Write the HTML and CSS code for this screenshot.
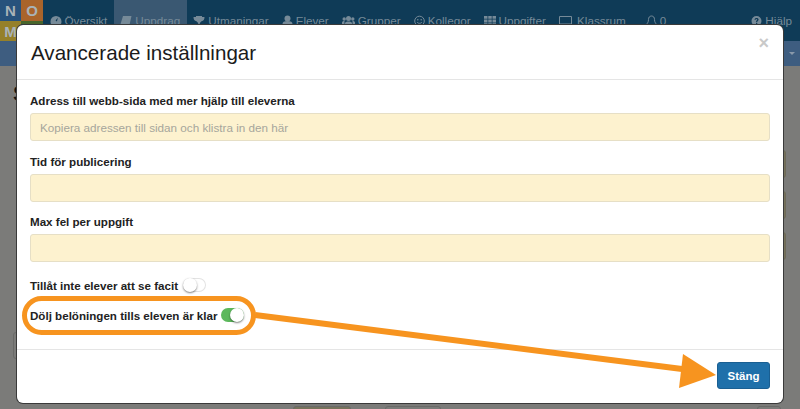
FILE: index.html
```html
<!DOCTYPE html>
<html lang="sv">
<head>
<meta charset="utf-8">
<title>Avancerade inställningar</title>
<link rel="stylesheet" href="styles.css">
</head>
<body>
<div class="page">
  <header class="navbar">
    <div class="logo">
      <span class="tile tile-n">N</span>
      <span class="tile tile-o">O</span>
      <span class="tile tile-m">M</span>
      <span class="tile-g"></span>
    </div>
    <nav class="nav">
      <a class="nav-item"><svg class="ico" width="12" height="11" viewBox="0 0 13 12"><path d="M6.500 1A6 6 0 0 0 .5 7c0 1.700.6 3.200 1.600 4h8.800c1-.8 1.600-2.300 1.600-4a6 6 0 0 0-6-6zM6 6l2.500-3L7.500 7z" fill="currentColor" fill-rule="evenodd"/></svg>Översikt</a>
      <a class="nav-item is-active"><svg class="ico" width="12" height="12" viewBox="0 0 12 12"><path d="M3 1h8.500L9.500 10H1.500C.5 10 .5 8.500 1 7.500z" fill="currentColor"/></svg>Uppdrag</a>
      <a class="nav-item"><svg class="ico" width="12" height="12" viewBox="0 0 12 12"><path d="M3 1h6v1h2.500c0 2.500-1 4-3 4.300C8 7.200 7 7.600 6.800 8v1.500H8.500V11h-5V9.500h1.700V8C5 7.600 4 7.200 3.500 6.300 1.500 6 .5 4.500.5 2H3z" fill="currentColor"/></svg>Utmaningar</a>
      <a class="nav-item"><svg class="ico" width="11" height="12" viewBox="0 0 11 12"><circle cx="5.500" cy="3.500" r="3" fill="currentColor"/><path d="M.5 11.500V9c0-1.800 1.500-3 5-3s5 1.200 5 3v2.500z" fill="currentColor"/></svg>Elever</a>
      <a class="nav-item"><svg class="ico" width="13" height="12" viewBox="0 0 13 12"><circle cx="6.500" cy="3.500" r="2.500" fill="currentColor"/><circle cx="2.200" cy="4" r="1.700" fill="currentColor"/><circle cx="10.800" cy="4" r="1.700" fill="currentColor"/><path d="M3 11V8.500C3 7 4.500 6.500 6.500 6.500S10 7 10 8.500V11zM0 9V7.500C0 6.500 1 6 2.500 6v3zM13 9V7.500C13 6.500 12 6 10.500 6v3z" fill="currentColor"/></svg>Grupper</a>
      <a class="nav-item"><svg class="ico" width="11" height="12" viewBox="0 0 11 12"><circle cx="5.500" cy="6" r="4.800" fill="none" stroke="currentColor"/><circle cx="3.800" cy="4.800" r=".8" fill="currentColor"/><circle cx="7.200" cy="4.800" r=".8" fill="currentColor"/><path d="M3.200 7.300c1 1.400 3.600 1.400 4.600 0" fill="none" stroke="currentColor"/></svg>Kollegor</a>
      <a class="nav-item"><svg class="ico" width="12" height="12" viewBox="0 0 12 12"><path d="M0 1h3.500v2.800H0zM4.250 1h3.500v2.800h-3.500zM8.500 1H12v2.800H8.500zM0 4.600h3.500v2.800H0zM4.250 4.600h3.500v2.800h-3.500zM8.500 4.600H12v2.800H8.500zM0 8.200h3.500V11H0zM4.250 8.200h3.500V11h-3.500zM8.500 8.200H12V11H8.500z" fill="currentColor"/></svg>Uppgifter</a>
      <a class="nav-item"><svg class="ico ico-wide" width="13" height="12" viewBox="0 0 13 12"><path d="M.5 1.500h12v7.500H.5zM4 11.300h5M6.500 9v2" fill="none" stroke="currentColor"/></svg>Klassrum</a>
      <a class="nav-item nav-bell"><svg class="ico" width="11" height="12" viewBox="0 0 11 12"><path d="M5.500 1C3.500 1 2.500 2.500 2.500 4.500c0 3-1.500 4-2 5h10c-.5-1-2-2-2-5C8.500 2.500 7.500 1 5.500 1zM4.300 10.500c.3 1 2.100 1 2.400 0" fill="none" stroke="currentColor"/></svg>0</a>
      <a class="nav-item nav-help"><svg class="ico" width="11" height="12" viewBox="0 0 11 12"><path d="M5.500 1a5 5 0 1 0 0 10 5 5 0 0 0 0-10zM5 8h1.300v1.300H5zM3.500 4.700C3.600 3.500 4.400 2.900 5.600 2.900c1.200 0 2 .7 2 1.700 0 1.500-1.500 1.300-1.400 2.700H5c-.1-1.800 1.200-1.800 1.200-2.700 0-.4-.3-.6-.7-.6-.5 0-.7.3-.8.7z" fill="currentColor" fill-rule="evenodd"/></svg>Hjälp</a>
    </nav>
  </header>
  <div class="subbar"><span class="caret"></span></div>
  <main class="behind">
    <div class="behind-left">
      <h1 class="behind-title">S</h1>
      <div class="stub-left"></div>
    </div>
    <div class="behind-right">
      <div class="stub-right"></div>
      <div class="stub-right"></div>
      <div class="stub-right"></div>
    </div>
  </main>
  <div class="behind-bottom">
    <span class="stub-bottom is-tan"></span>
    <span class="stub-bottom"></span>
    <span class="stub-bottom stub-end"></span>
  </div>

  <section class="modal">
    <div class="modal-header">
      <h2 class="modal-title">Avancerade inställningar</h2>
      <span class="close">×</span>
    </div>
    <div class="modal-body">
      <div class="field">
        <label class="label">Adress till webb-sida med mer hjälp till eleverna</label>
        <input class="input" type="text" placeholder="Kopiera adressen till sidan och klistra in den här">
      </div>
      <div class="field">
        <label class="label">Tid för publicering</label>
        <input class="input" type="text">
      </div>
      <div class="field">
        <label class="label">Max fel per uppgift</label>
        <input class="input" type="text">
      </div>
      <div class="switch-list">
        <div class="switch-row">
          <span class="label">Tillåt inte elever att se facit</span>
          <span class="switch"><span class="knob"></span></span>
        </div>
        <div class="switch-row">
          <span class="label">Dölj belöningen tills eleven är klar</span>
          <span class="switch is-on"><span class="knob"></span></span>
        </div>
      </div>
    </div>
    <div class="modal-footer">
      <button class="btn" type="button">Stäng</button>
    </div>
  </section>

  <svg class="annotation" width="800" height="409" viewBox="0 0 800 409">
    <rect x="24.500" y="298.500" width="229" height="34" rx="17" fill="none" stroke="#f7941f" stroke-width="5"/>
    <path d="M255 315L690 370" fill="none" stroke="#f7941f" stroke-width="6"/>
    <path d="M683 354L716 375L679 388z" fill="#f7941f"/>
  </svg>
</div>
</body>
</html>
```
FILE: styles.css
```css
* { box-sizing: border-box; }
html, body { margin: 0; padding: 0; }
body { font-family: "Liberation Sans", Arial, sans-serif; background: #7b7b79; }
.page { position: relative; width: 800px; height: 409px; overflow: hidden; background: #7b7b79; display: flex; flex-direction: column; }

.navbar { display: flex; height: 41px; background: #0f3b57; flex: none; }
.logo { width: 43px; display: grid; grid-template-columns: 21px 22px; grid-template-rows: 21px 3px 17px; flex: none; }
.tile { display: flex; align-items: center; justify-content: center; font-size: 15px; font-weight: 700; color: #a9b3b8; }
.tile-n { background: #27527c; }
.tile-o { background: #a9642b; }
.tile-m { background: #95802a; grid-row: 2 / 4; grid-column: 1; }
.tile-g { background: #48662c; grid-row: 2; grid-column: 2; }

.nav { display: flex; flex: 1; height: 41px; color: #768a98; font-size: 11.700px; }
.nav-item { display: flex; align-items: flex-start; padding: 14px 6.500px 0; height: 41px; line-height: 13px; white-space: nowrap; }
.ico { margin-right: 3px; margin-top: 1px; flex: none; }
.ico-wide { margin-right: 5px; }
.is-active { background: #3a5872; }
.nav-bell { margin-left: 7px; }
.nav-help { margin-left: auto; padding-right: 8px; }

.subbar { height: 25px; background: #3e5d80; flex: none; display: flex; justify-content: flex-end; align-items: center; padding-right: 5px; }
.caret { width: 0; height: 0; border: 3px solid transparent; border-top: 3px solid #8a99aa; border-bottom: 0; }

.behind { flex: 1; display: flex; justify-content: space-between; padding: 16px 0 0 13px; }
.behind-left { display: flex; flex-direction: column; }
.behind-title { margin: 0; font-size: 22px; line-height: 24px; font-weight: 700; color: #111; }
.stub-left { width: 20px; height: 27px; margin-top: 226px; border: 1px solid #6a6a68; border-radius: 3px; }
.behind-right { display: flex; flex-direction: column; gap: 13px; padding-top: 68px; margin-right: 14px; }
.stub-right { width: 20px; height: 28px; background: #77725c; border: 1px solid #6d6a58; border-radius: 3px; }

.behind-bottom { flex: none; height: 3px; display: flex; }
.stub-bottom { width: 56px; height: 6px; margin-left: 34px; border: 1px solid #6a6a68; border-radius: 3px; }
.is-tan { margin-left: 293px; width: 58px; background: #77725c; }
.stub-end { margin-left: auto; margin-right: 19px; width: 24px; }

.modal { position: absolute; left: 17px; top: 25px; width: 766px; height: 378px; background: #fff; border-radius: 6px; box-shadow: 0 0 0 1px #3a3a3a; display: flex; flex-direction: column; }
.modal-header { height: 55px; flex: none; display: flex; justify-content: space-between; border-bottom: 1px solid #e5e5e5; padding: 0 14px 0 14px; }
.modal-title { margin: 0; font-size: 20.600px; font-weight: 400; line-height: 56px; color: #1b1b1b; }
.close { font-size: 18px; font-weight: 700; line-height: 37px; color: #c9c9c9; }
.modal-body { flex: 1; padding: 13px 13px 0 13px; display: flex; flex-direction: column; }
.field { display: flex; flex-direction: column; height: 60.700px; }
.label { font-size: 11.600px; font-weight: 700; line-height: 15px; color: #222; white-space: nowrap; }
.input { width: 740px; height: 28px; margin-top: 5px; background: #fdf2cf; border: 1px solid #e6dfc6; border-radius: 3px; padding: 0 9px; font: 11.700px "Liberation Sans", Arial, sans-serif; color: #333; outline: 0; }
.input::placeholder { color: #a6a69c; opacity: 1; }
.switch-list { display: flex; flex-direction: column; margin-top: -5px; }
.switch-row { display: flex; align-items: center; height: 30px; }
.switch { width: 23px; height: 14px; margin-left: 5px; border-radius: 7px; background: #fff; box-shadow: inset 0 0 0 1px #e3e3e3; display: flex; }
.knob { width: 14px; height: 14px; border-radius: 50%; background: #fff; box-shadow: 0 1px 2px rgba(0,0,0,.5); }
.is-on { margin-left: 3px; background: #5cb85c; box-shadow: none; justify-content: flex-end; }
.modal-footer { height: 54px; flex: none; border-top: 1px solid #e5e5e5; display: flex; justify-content: flex-end; padding: 12px 13px 0 0; }
.btn { width: 53px; height: 27px; background: #1f70aa; border: 1px solid #1a5f92; border-radius: 3px; color: #fff; font: 700 11.500px "Liberation Sans", Arial, sans-serif; padding: 0; }

.annotation { position: absolute; left: 0; top: 0; pointer-events: none; }
```
